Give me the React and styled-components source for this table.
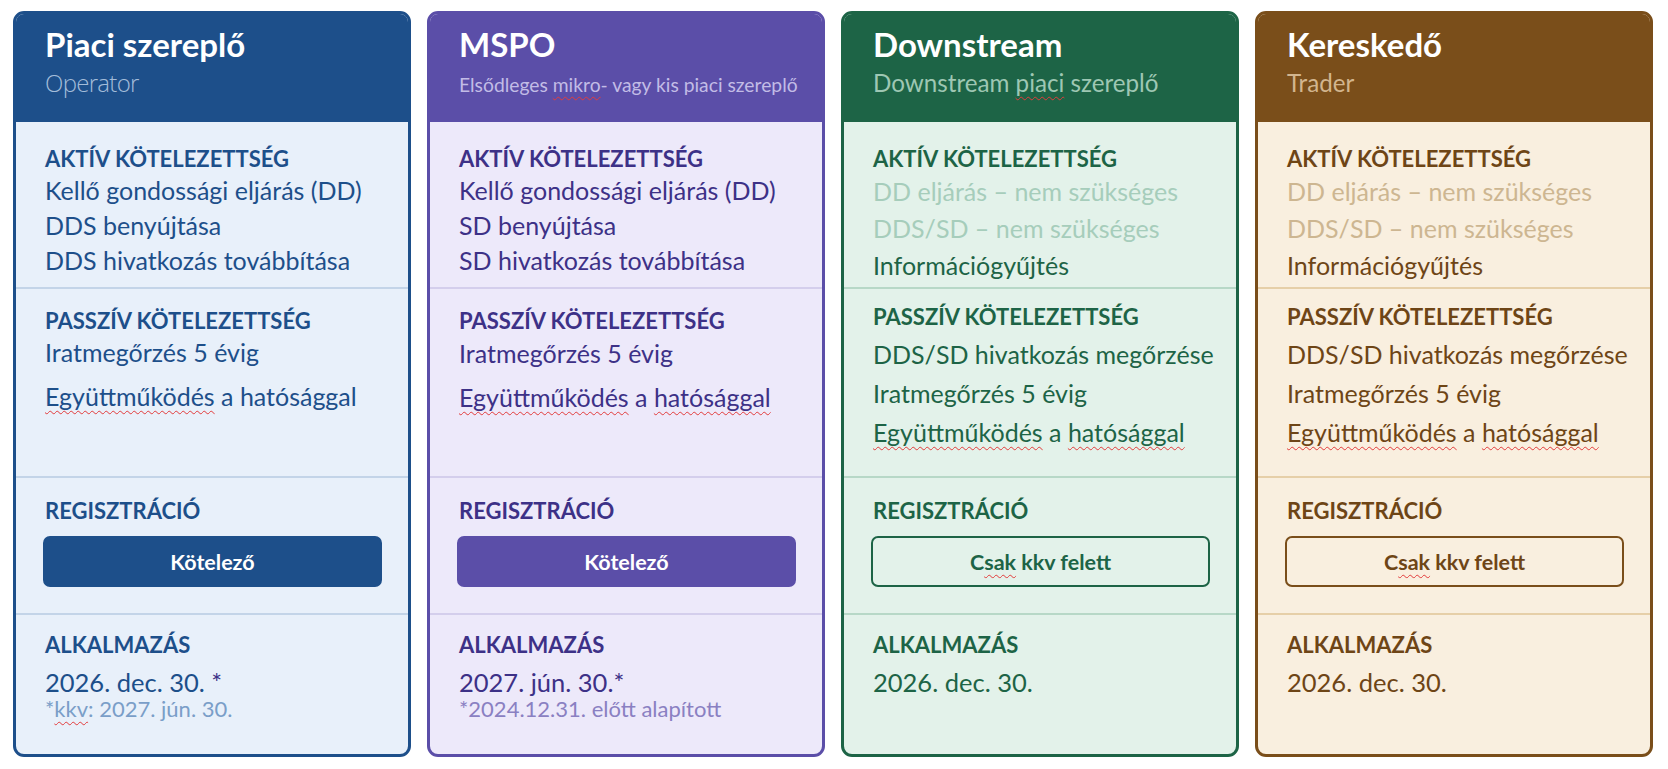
import styled, { createGlobalStyle } from "styled-components";

const GlobalStyle = createGlobalStyle`
  html, body {
    margin: 0;
    padding: 0;
    background: #ffffff;
  }
  body {
    font-family: "Lato", "Liberation Sans", sans-serif;
  }
`;

// colour set for each role card
const palettes = {
  blue: {
    main: "#1d4f8a",
    body: "#e8f0fa",
    text: "#1d4f8a",
    line: "#c3d4e8",
    sub: "#a3bcd9",
    faded: "#a9c0dc",
    note: "#7a9ec8",
  },
  purple: {
    main: "#5b4ea8",
    body: "#ede9fa",
    text: "#3d3187",
    line: "#d4ceec",
    sub: "#c2bce6",
    faded: "#b7afe0",
    note: "#8a80c2",
  },
  green: {
    main: "#1d6446",
    body: "#e3f2ea",
    text: "#1d6446",
    line: "#b7d8c7",
    sub: "#9ec7b3",
    faded: "#a6cdbb",
    note: "#7bb097",
  },
  brown: {
    main: "#7a4e1a",
    body: "#f9efdf",
    text: "#6e4516",
    line: "#e6cfa8",
    sub: "#d2b58e",
    faded: "#cdb691",
    note: "#b69468",
  },
};

const Sq = styled.span`
  text-decoration: underline wavy #e23b3b;
  text-decoration-thickness: 1px;
  text-underline-offset: 4px;
  text-decoration-skip-ink: none;
`;

const Star = styled.span`
  color: #3d3187;
`;

const cards = [
  {
    id: "operator",
    pal: palettes.blue,
    title: "Piaci szereplő",
    subtitle: "Operator",
    thinSub: true,
    activeLh: 35,
    passiveLh: 35,
    active: [
      { t: "Kellő gondossági eljárás (DD)" },
      { t: "DDS benyújtása" },
      { t: "DDS hivatkozás továbbítása" },
    ],
    passive: [
      { t: "Iratmegőrzés 5 évig" },
      { t: <><Sq>Együttműködés</Sq> a hatósággal</>, gap: 9 },
    ],
    reg: { label: "Kötelező", filled: true },
    date: <>2026. dec. 30. <Star>*</Star></>,
    note: <>*<Sq>kkv</Sq>: 2027. jún. 30.</>,
  },
  {
    id: "mspo",
    pal: palettes.purple,
    title: "MSPO",
    subtitle: <>Elsődleges <Sq>mikro</Sq>- vagy kis piaci szereplő</>,
    smallSub: true,
    activeLh: 35,
    passiveLh: 36,
    active: [
      { t: "Kellő gondossági eljárás (DD)" },
      { t: "SD benyújtása" },
      { t: "SD hivatkozás továbbítása" },
    ],
    passive: [
      { t: "Iratmegőrzés 5 évig" },
      { t: <><Sq>Együttműködés</Sq> a <Sq>hatósággal</Sq></>, gap: 8 },
    ],
    reg: { label: "Kötelező", filled: true },
    date: "2027. jún. 30.*",
    note: "*2024.12.31. előtt alapított",
  },
  {
    id: "downstream",
    pal: palettes.green,
    title: "Downstream",
    subtitle: <>Downstream <Sq>piaci</Sq> szereplő</>,
    activeLh: 37,
    passiveLh: 39,
    tight: true,
    active: [
      { t: "DD eljárás – nem szükséges", faded: true },
      { t: "DDS/SD – nem szükséges", faded: true },
      { t: "Információgyűjtés" },
    ],
    passive: [
      { t: "DDS/SD hivatkozás megőrzése", gap: 4 },
      { t: "Iratmegőrzés 5 évig" },
      { t: <><Sq>Együttműködés</Sq> a <Sq>hatósággal</Sq></> },
    ],
    reg: { label: <>C<Sq>sak</Sq> kkv felett</>, filled: false },
    date: "2026. dec. 30.",
  },
  {
    id: "trader",
    pal: palettes.brown,
    title: "Kereskedő",
    subtitle: "Trader",
    activeLh: 37,
    passiveLh: 39,
    tight: true,
    active: [
      { t: "DD eljárás – nem szükséges", faded: true },
      { t: "DDS/SD – nem szükséges", faded: true },
      { t: "Információgyűjtés" },
    ],
    passive: [
      { t: "DDS/SD hivatkozás megőrzése", gap: 4 },
      { t: "Iratmegőrzés 5 évig" },
      { t: <><Sq>Együttműködés</Sq> a <Sq>hatósággal</Sq></> },
    ],
    reg: { label: <>C<Sq>sak</Sq> kkv felett</>, filled: false },
    date: "2026. dec. 30.",
  },
];

const RoleCard = ({ card }) => {
  const { pal } = card;
  return (
    <Card $pal={pal}>
      <Header $pal={pal}>
        <Title>{card.title}</Title>
        <Subtitle $pal={pal} $thin={card.thinSub} $small={card.smallSub}>
          {card.subtitle}
        </Subtitle>
      </Header>

      <Section $h={165} $pt={23}>
        <SectionTitle>AKTÍV KÖTELEZETTSÉG</SectionTitle>
        {card.active.map((it, i) => (
          <Item key={i} $faded={it.faded} $pal={pal} $lh={card.activeLh}>
            {it.t}
          </Item>
        ))}
      </Section>

      <Section $h={189} $pt={card.tight ? 14 : 18} $line={pal.line}>
        <SectionTitle>PASSZÍV KÖTELEZETTSÉG</SectionTitle>
        {card.passive.map((it, i) => (
          <Item key={i} $gap={it.gap} $lh={card.passiveLh}>
            {it.t}
          </Item>
        ))}
      </Section>

      <Section $h={137} $pt={19} $line={pal.line}>
        <SectionTitle>REGISZTRÁCIÓ</SectionTitle>
        <RegButton $pal={pal} $filled={card.reg.filled}>
          <span>{card.reg.label}</span>
        </RegButton>
      </Section>

      <Section $grow $pt={16} $line={pal.line}>
        <SectionTitle>ALKALMAZÁS</SectionTitle>
        <DateText>{card.date}</DateText>
        {card.note && <Note $pal={pal}>{card.note}</Note>}
      </Section>
    </Card>
  );
};

const App = () => {
  return (
    <>
      <GlobalStyle />
      <Page>
        {cards.map((c) => (
          <RoleCard key={c.id} card={c} />
        ))}
      </Page>
    </>
  );
};

const Page = styled.div`
  display: flex;
  gap: 16px;
  padding: 11px 15px 0 13px;
  width: 1668px;
  height: 769px;
  box-sizing: border-box;
`;

const Card = styled.div`
  width: 398px;
  height: 746px;
  box-sizing: border-box;
  border: 3px solid ${(p) => p.$pal.main};
  border-radius: 11px;
  background: ${(p) => p.$pal.body};
  color: ${(p) => p.$pal.text};
  overflow: hidden;
  display: flex;
  flex-direction: column;
`;

const Header = styled.div`
  height: 108px;
  flex: none;
  box-sizing: border-box;
  background: ${(p) => p.$pal.main};
  padding: 11px 16px 0 29px;
`;

const Title = styled.div`
  font-size: 33px;
  line-height: 38px;
  font-weight: 700;
  color: #ffffff;
`;

const Subtitle = styled.div`
  margin-top: ${(p) => (p.$small ? "5px" : "3px")};
  font-family: ${(p) =>
    p.$thin ? '"Open Sans", "Lato", sans-serif' : '"Lato", sans-serif'};
  font-weight: ${(p) => (p.$thin ? 300 : 400)};
  font-size: ${(p) => (p.$small ? "19.3px" : p.$thin ? "24px" : "24.2px")};
  letter-spacing: ${(p) => (p.$thin ? "-0.7px" : "0")};
  line-height: 34px;
  color: ${(p) => p.$pal.sub};
  white-space: nowrap;
`;

const Section = styled.div`
  box-sizing: border-box;
  height: ${(p) => (p.$h ? `${p.$h}px` : "auto")};
  flex: ${(p) => (p.$grow ? 1 : "none")};
  padding: ${(p) => p.$pt}px 20px 0 29px;
  border-top: ${(p) => (p.$line ? `2px solid ${p.$line}` : "none")};
  display: flex;
  flex-direction: column;
`;

const SectionTitle = styled.div`
  font-size: 22px;
  line-height: 27px;
  font-weight: 700;
  margin-bottom: 1px;
  white-space: nowrap;
`;

const Item = styled.div`
  font-size: 25px;
  line-height: ${(p) => p.$lh || 36}px;
  margin-top: ${(p) => p.$gap || 0}px;
  color: ${(p) => (p.$faded ? p.$pal.faded : "inherit")};
  white-space: nowrap;
`;

const RegButton = styled.div`
  margin: 11px 6px 0 -2px;
  height: 51px;
  box-sizing: border-box;
  border-radius: 7px;
  display: flex;
  align-items: center;
  justify-content: center;
  font-size: 21.5px;
  font-weight: 700;
  background: ${(p) => (p.$filled ? p.$pal.main : "transparent")};
  color: ${(p) => (p.$filled ? "#ffffff" : p.$pal.text)};
  border: 2px solid ${(p) => p.$pal.main};
`;

const DateText = styled.div`
  font-size: 25.5px;
  line-height: 32px;
  margin-top: 7px;
`;

const Note = styled.div`
  font-size: 22px;
  line-height: 22px;
  color: ${(p) => p.$pal.note};
  white-space: nowrap;
`;

export default App;
